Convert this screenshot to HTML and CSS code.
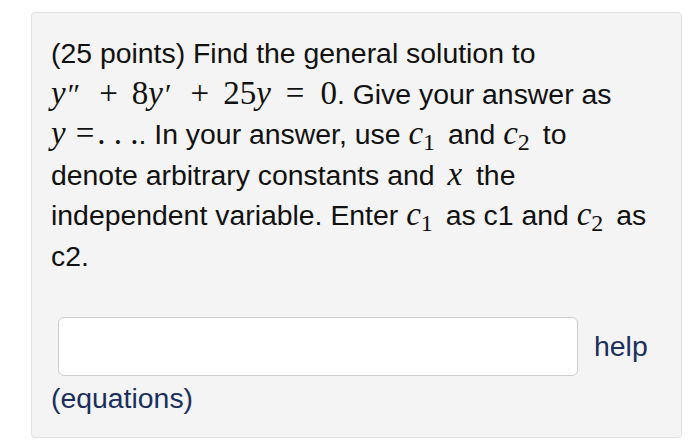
FILE: index.html
```html
<!DOCTYPE html>
<html>
<head>
<meta charset="utf-8">
<link rel="stylesheet" href="styles.css">
</head>
<body>
<div class="problem">
  <div class="text">
    (25 points) Find the general solution to<br>
    <span class="m"><i>y</i><span class="pr">″</span><span class="op">+</span>8<i>y</i><span class="pr">′</span><span class="op">+</span>25<i>y</i><span class="rel">=</span>0</span>. Give your answer as<br>
    <span class="m"><i>y</i><span class="rel r0">=</span><span class="dots">. . .</span></span>. In your answer, use <span class="m"><i>c</i><sub>1</sub></span> and <span class="m"><i>c</i><sub>2</sub></span> to<br>
    denote arbitrary constants and <span class="m var"><i>x</i></span> the<br>
    independent variable. Enter <span class="m"><i>c</i><sub>1</sub></span> as c1 and <span class="m"><i>c</i><sub>2</sub></span> as<br>
    c2.
  </div>
  <div class="answer">
    <input class="field" type="text">
    <a class="help">help</a>
  </div>
  <a class="eq">(equations)</a>
</div>
</body>
</html>
```
FILE: styles.css
```css
html, body {
  margin: 0;
  background: #ffffff;
}
body {
  padding: 12px 0 0 31px;
  font-family: "Liberation Sans", Arial, sans-serif;
  color: #111111;
}
.problem {
  box-sizing: border-box;
  width: 651px;
  height: 426px;
  background: #f4f4f4;
  border: 1px solid #e2e2e2;
  border-radius: 4px;
  padding: 20px 19px 0 19px;
}
.text {
  font-size: 28.4px;
  line-height: 40.5px;
}
.m {
  font-family: "Liberation Serif", "Times New Roman", serif;
  font-size: 33px;
  line-height: 0;
  white-space: nowrap;
}
.m i {
  font-style: italic;
}
.var {
  margin: 0 6px 0 5px;
}
.pr {
  font-size: 30px;
  margin-left: 2px;
}
.op {
  margin: 0 14px 0 19px;
}
.rel {
  margin: 0 16px 0 15px;
}
.r0 {
  margin: 0 3px 0 10px;
}
.m sub {
  font-size: 24px;
  vertical-align: -6px;
  line-height: 0;
  margin-right: 5px;
}
.answer {
  display: flex;
  align-items: center;
  gap: 16px;
  margin-top: 41px;
}
.field {
  box-sizing: border-box;
  width: 520px;
  height: 59px;
  margin: 0 0 0 7px;
  background: #ffffff;
  border: 1px solid #cfcfcf;
  border-radius: 6px;
}
.help, .eq {
  color: #1b2f5e;
  font-size: 28.4px;
}
.eq {
  display: block;
  margin-top: 6px;
}
```
